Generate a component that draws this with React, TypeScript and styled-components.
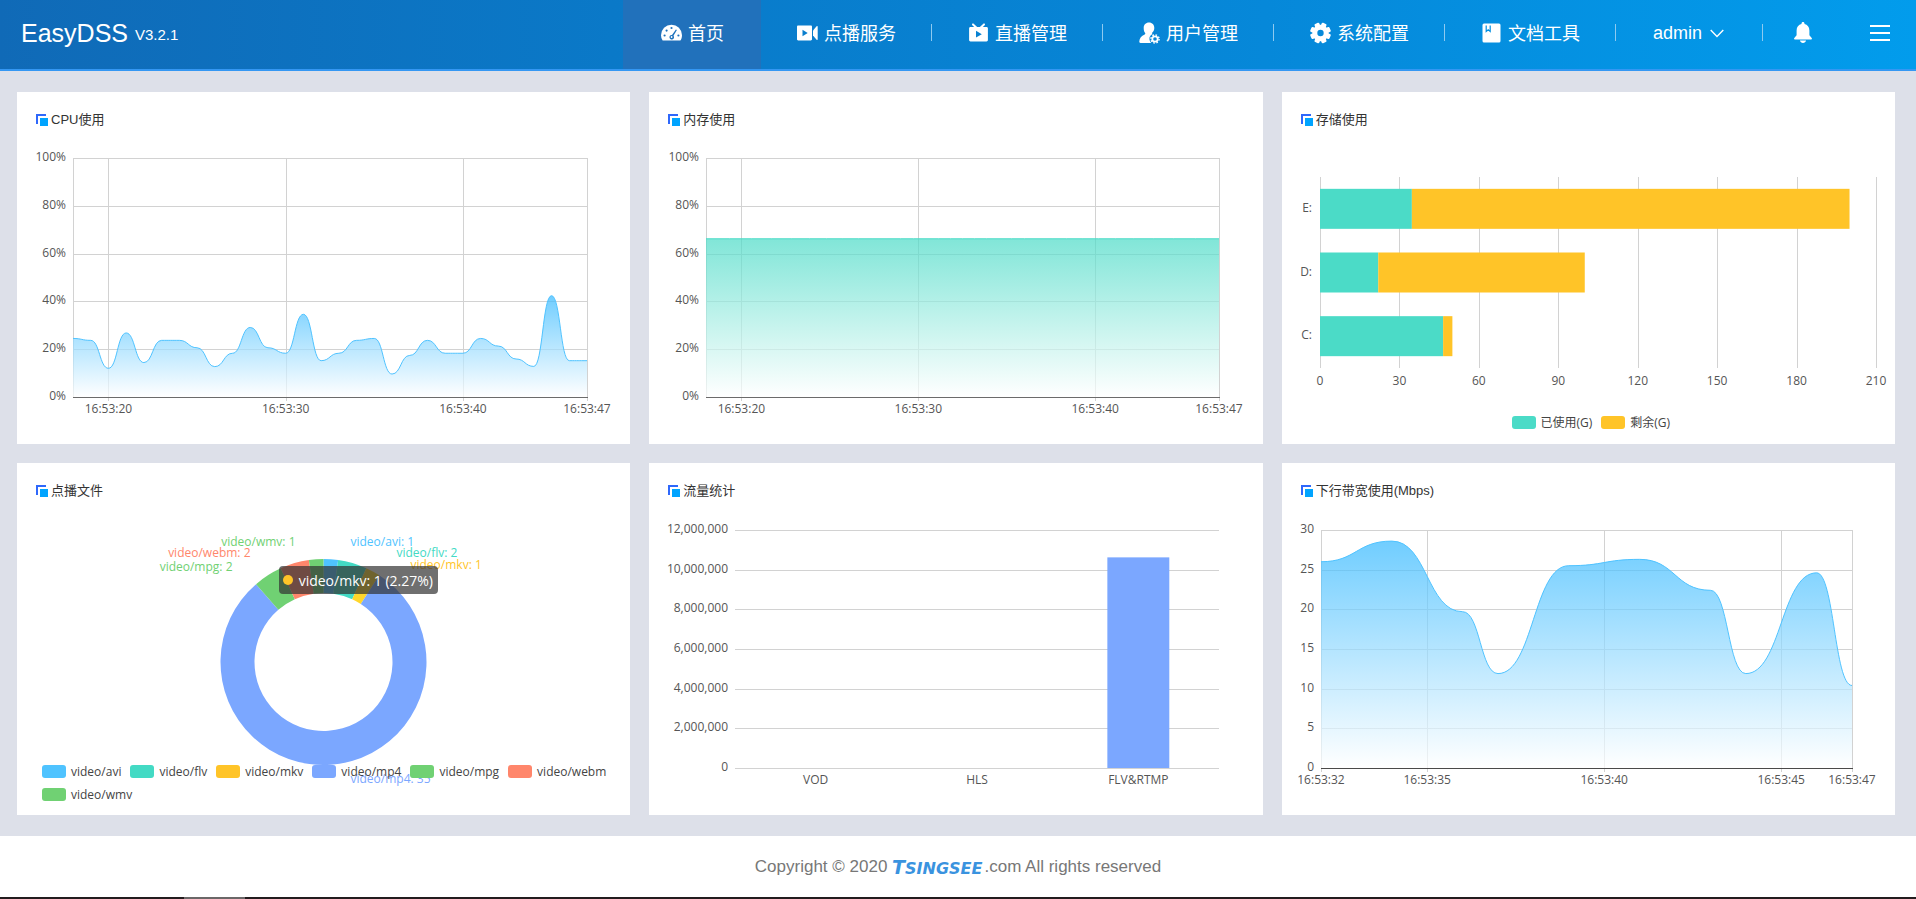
import React, { useLayoutEffect, useRef, useState } from "react";
import styled, { createGlobalStyle } from "styled-components";

/* ---------- theme values ---------- */

const uiFont = '"Liberation Sans", "Noto Sans CJK SC", sans-serif';
const chartFont = '"Open Sans", "Noto Sans CJK SC", sans-serif';

const color = {
  sky: "#4fc3ff",
  teal: "#4bdbc7",
  amber: "#ffc428",
  blue: "#7ba7ff",
  green: "#70d173",
  coral: "#ff866b",
  grid: "#d2d2d2",
  label: "#555",
};

const GlobalStyle = createGlobalStyle`
  *, *::before, *::after { box-sizing: border-box; }
  body { margin: 0; background: #dde0e9; font-family: ${uiFont}; color: #333; }
  button { font: inherit; color: inherit; background: none; border: 0; padding: 0; cursor: pointer; }
  a { color: inherit; text-decoration: none; }
  ul { list-style: none; margin: 0; padding: 0; }
`;

/* ---------- header ---------- */

const Header = styled.header`
  display: flex;
  align-items: stretch;
  justify-content: space-between;
  height: 71px;
  padding: 0 26px 0 21px;
  color: #fff;
  border-bottom: 2px solid #3497f3;
  background: linear-gradient(90deg, #106ab7 0%, #0a79c8 32%, #0688d9 66%, #029cec 100%) border-box;
`;

const Brand = styled.a`
  display: flex;
  align-items: center;
  gap: 7px;
  padding-bottom: 2px;
  font-size: 25px;
`;

const Version = styled.span`
  padding-top: 2px;
  font-size: 15px;
`;

const Nav = styled.nav`
  display: flex;
  align-items: stretch;
  font-size: 18px;
  white-space: nowrap;
`;

const NavLink = styled.a<{ $active?: boolean }>`
  display: flex;
  align-items: center;
  justify-content: center;
  gap: 6px;
  min-width: 138px;
  padding: 0 35px 6px 36px;
  background: ${(p) => (p.$active ? "#2171bb" : "transparent")};

  svg { display: block; width: 21px; height: 22px; margin-top: 2px; }
`;

const Divider = styled.span`
  align-self: center;
  width: 1px;
  height: 17px;
  margin-bottom: 4px;
  background: #8ecaf0;
`;

const UserButton = styled.button`
  display: flex;
  align-items: center;
  gap: 8px;
  padding: 0 38px 2px 37px;
`;

const IconButton = styled.button<{ $gap: number }>`
  display: flex;
  align-items: center;
  padding: 0 0 4px;
  margin-left: ${(p) => p.$gap}px;

  svg { display: block; }
`;

const GaugeIcon = () => (
  <svg viewBox="0 0 21 22" aria-hidden="true">
    <path fill="#fff" d="M1.6 18.6A10.4 10.4 0 0 1 0 13.2 10.5 10.5 0 0 1 21 13.2c0 2-.6 3.900-1.600 5.400z" />
    <g fill="#1f72bc">
      <circle cx="3.600" cy="13.500" r="1.100" />
      <circle cx="5.600" cy="8.600" r="1.100" />
      <circle cx="10.500" cy="6" r="1.100" />
      <circle cx="17.400" cy="13.500" r="1.100" />
      <path d="M14.900 7.400l1 .700-3.400 5.600a2.300 2.300 0 1 1-1.500-.800z" />
    </g>
    <circle cx="10.600" cy="15" r=".9" fill="#fff" />
  </svg>
);

const VideoIcon = () => (
  <svg viewBox="0 0 21 22" aria-hidden="true">
    <path fill="#fff" fillRule="evenodd" d="M1.200 3.500h12.600c.7 0 1.200.5 1.200 1.200v12.600c0 .7-.5 1.200-1.200 1.200H1.200C.5 18.500 0 18 0 17.300V4.700c0-.7.5-1.200 1.200-1.200zM5.500 7.800v6.400l5.200-3.200z" />
    <path fill="#fff" d="M16 8.600l3.600-4.300c.5-.5 1.100-.3 1.100.4v12.600c0 .7-.6.900-1.100.4L16 13.400z" />
  </svg>
);

const TvIcon = () => (
  <svg viewBox="0 0 21 22" aria-hidden="true">
    <path fill="none" stroke="#fff" strokeWidth="2" strokeLinecap="round" d="M5 2.400l4 3.800M16 2.400l-4 3.800" />
    <path fill="#fff" fillRule="evenodd" d="M2.500 5h16c.8 0 1.400.6 1.400 1.400v11.700c0 .8-.6 1.400-1.400 1.400h-16c-.8 0-1.400-.6-1.400-1.400V6.400C1.100 5.600 1.700 5 2.500 5zM8 8.800v6.800l5.800-3.400z" />
  </svg>
);

const UserIcon = () => (
  <svg viewBox="0 0 21 22" aria-hidden="true">
    <path fill="#fff" d="M10 .5c3.200 0 5.300 2.300 5.300 5.400 0 2-.9 3.500-2 4.700-.4.500-.3 1.200.2 1.500-2.200 1-3.400 3.100-3 5.600.2 1.400.8 2.500 1.700 3.300H1.500c-.8 0-1.300-.6-1.200-1.400.2-3.500 2-5.900 5.400-7.200.7-.3.800-1 .3-1.600C5.100 9.600 4.700 8 4.700 5.900 4.700 2.800 6.800.5 10 .5z" />
    <circle cx="16" cy="17" r="2.700" fill="none" stroke="#fff" strokeWidth="1.800" />
    <circle cx="16" cy="17" r="4.100" fill="none" stroke="#fff" strokeWidth="1.400" strokeDasharray="1.610 1.610" />
  </svg>
);

const GearIcon = () => (
  <svg viewBox="0 0 21 22" aria-hidden="true">
    <circle cx="10.500" cy="11" r="5.700" fill="none" stroke="#fff" strokeWidth="5" />
    <g fill="#fff">
      {[0, 45, 90, 135, 180, 225, 270, 315].map((a) => (
        <rect key={a} x="7.900" y=".6" width="5.200" height="4" rx="1.200" transform={`rotate(${a + 22.5} 10.5 11)`} />
      ))}
    </g>
  </svg>
);

const BookIcon = () => (
  <svg viewBox="0 0 21 22" aria-hidden="true">
    <rect x="1.500" y="1.500" width="18" height="19" rx="1.500" fill="#fff" />
    <path fill="none" stroke="#0490e2" strokeWidth="1.200" d="M5.200 3.500v6l2-1.800 2 1.800v-6" />
  </svg>
);

const ChevronIcon = () => (
  <svg width="14" height="9" viewBox="0 0 14 9" aria-hidden="true">
    <path fill="none" stroke="#fff" strokeWidth="1.400" d="M.7 1L7 7.600 13.300 1" />
  </svg>
);

const BellIcon = () => (
  <svg width="18" height="21" viewBox="0 0 18 21" aria-hidden="true">
    <path fill="#fff" d="M9 0c.9 0 1.500.6 1.500 1.500v.6c3 .7 4.900 3.100 4.900 6.300v4.800l2.300 2.900c.5.700.2 1.300-.6 1.300H.9c-.8 0-1.100-.6-.6-1.300l2.300-2.900V8.400c0-3.200 1.900-5.600 4.900-6.300v-.6C7.500.6 8.100 0 9 0zM5.900 18.600h6.200C11.700 20.100 10.500 21 9 21s-2.700-.9-3.100-2.400z" />
  </svg>
);

const MenuIcon = () => (
  <svg width="20" height="16" viewBox="0 0 20 16" aria-hidden="true">
    <path fill="#fff" d="M0 0h20v2H0zM0 7h20v2H0zM0 14h20v2H0z" />
  </svg>
);

const navItems = [
  { label: "点播服务", Icon: VideoIcon },
  { label: "直播管理", Icon: TvIcon },
  { label: "用户管理", Icon: UserIcon },
  { label: "系统配置", Icon: GearIcon },
  { label: "文档工具", Icon: BookIcon },
];

const TopBar = () => (
  <Header>
    <Brand href="#home">
      EasyDSS <Version>V3.2.1</Version>
    </Brand>
    <Nav>
      <NavLink href="#home" $active>
        <GaugeIcon />
        首页
      </NavLink>
      {navItems.map(({ label, Icon }) => (
        <React.Fragment key={label}>
          <NavLink href={`#${label}`}>
            <Icon />
            {label}
          </NavLink>
          <Divider />
        </React.Fragment>
      ))}
      <UserButton type="button">
        admin
        <ChevronIcon />
      </UserButton>
      <Divider />
      <IconButton type="button" $gap={31} aria-label="通知">
        <BellIcon />
      </IconButton>
      <IconButton type="button" $gap={58} aria-label="菜单">
        <MenuIcon />
      </IconButton>
    </Nav>
  </Header>
);

/* ---------- cards ---------- */

const Board = styled.main`
  display: grid;
  grid-template-columns: repeat(3, minmax(0, 1fr));
  gap: 19px;
  padding: 21px 21px 21px 17px;
`;

const Card = styled.section`
  background: #fff;
`;

const CardTitle = styled.h2`
  display: flex;
  align-items: center;
  gap: 3px;
  height: 54px;
  margin: 0;
  padding: 0 19px 2px;
  font-size: 13px;
  font-weight: 400;

  svg { margin-top: 4px; }
`;

const Plot = styled.div<{ $height: number }>`
  position: relative;
  height: ${(p) => p.$height}px;

  > svg { display: block; }
`;

const ChartSvg = styled.svg`
  width: 100%;
  height: 100%;
  font-family: ${chartFont};
  font-size: 12px;
  fill: ${color.label};
`;

const Panel = ({ title, children }: { title: string; children: React.ReactNode }) => (
  <Card>
    <CardTitle>
      <svg width="12" height="12" viewBox="0 0 12 12" aria-hidden="true">
        <path fill="#2f68fb" d="M0 0h10v2H2v8H0z" />
        <path fill="#00a4ff" d="M4 4h8v8H4z" />
      </svg>
      {title}
    </CardTitle>
    {children}
  </Card>
);

const useWidth = () => {
  const ref = useRef<HTMLDivElement>(null);
  const [width, setWidth] = useState(613);
  useLayoutEffect(() => {
    const el = ref.current;
    if (!el) return;
    const update = () => setWidth(el.clientWidth);
    update();
    const observer = new ResizeObserver(update);
    observer.observe(el);
    return () => observer.disconnect();
  }, []);
  return [ref, width] as const;
};

/* ---------- area chart ---------- */

type Point = [number, number];

interface AreaProps {
  name: string;
  id: string;
  points: Point[];
  maxX: number;
  maxY: number;
  yTicks: number[];
  xTicks: [number, string][];
  unit?: string;
  left: number;
  right: number;
  top: number;
  axis: string;
  line: string;
  fill: string;
}

const PLOT_BOTTOM = 251;

const AreaChart = (p: AreaProps) => {
  const [ref, width] = useWidth();
  const x = (v: number) => p.left + (v / p.maxX) * (width - p.left - p.right);
  const y = (v: number) => PLOT_BOTTOM - (v / p.maxY) * (PLOT_BOTTOM - p.top);
  const snap = (v: number) => Math.round(v) + 0.5;

  const curve = p.points
    .map(([px, py], i) => {
      if (i === 0) return `M${x(px)} ${y(py)}`;
      const [qx, qy] = p.points[i - 1];
      const mid = (x(px) + x(qx)) / 2;
      return `C${mid} ${y(qy)} ${mid} ${y(py)} ${x(px)} ${y(py)}`;
    })
    .join("");
  const peak = Math.max(...p.points.map((pt) => pt[1]));

  return (
    <Plot ref={ref} $height={298}>
      <ChartSvg role="img" aria-label={p.name}>
        <defs>
          <linearGradient id={p.id} gradientUnits="userSpaceOnUse" x1="0" x2="0" y1={y(peak)} y2={PLOT_BOTTOM}>
            <stop offset="0" stopColor={p.fill} />
            <stop offset="1" stopColor="#fff" />
          </linearGradient>
        </defs>
        <g stroke={color.grid}>
          {p.yTicks.map((t) => (
            <line key={t} x1={x(0)} x2={x(p.maxX)} y1={snap(y(t))} y2={snap(y(t))} />
          ))}
          {[0, ...p.xTicks.map((t) => t[0])].map((t, i) => (
            <line key={i} x1={snap(x(t))} x2={snap(x(t))} y1={p.top} y2={PLOT_BOTTOM + (i ? 4 : 0)} />
          ))}
        </g>
        <path d={`${curve}L${x(p.maxX)} ${PLOT_BOTTOM}L${x(0)} ${PLOT_BOTTOM}Z`} fill={`url(#${p.id})`} opacity={0.7} />
        <line x1={x(0)} x2={x(p.maxX) + 1} y1={PLOT_BOTTOM + 0.5} y2={PLOT_BOTTOM + 0.5} stroke={p.axis} />
        <path d={curve} fill="none" stroke={p.line} />
        {p.yTicks.map((t) => (
          <text key={t} x={p.left - 7} y={y(t) + 3} textAnchor="end">
            {t}
            {p.unit}
          </text>
        ))}
        {p.xTicks.map(([t, label]) => (
          <text key={label} x={x(t)} y={PLOT_BOTTOM + 16} textAnchor="middle">
            {label}
          </text>
        ))}
      </ChartSvg>
    </Plot>
  );
};

const cpu = [
  24.5, 23.7, 12, 26.8, 14.4, 23.7, 23.7, 20.6, 12.7, 18.3, 29.1, 20.6, 18.3, 34.6, 15.2, 18.3, 23.7, 24.5, 9.6, 17.4,
  23.7, 18.3, 18.3, 24.5, 21.3, 15.9, 12.8, 42.4, 15.2, 15.2,
];
const minuteTicks: [number, string][] = [
  [2, "16:53:20"],
  [12, "16:53:30"],
  [22, "16:53:40"],
  [29, "16:53:47"],
];
const percentTicks = [0, 20, 40, 60, 80, 100];

const bandwidth: Point[] = [
  [0, 26], [2, 28.6], [4, 19.7], [5, 11.9], [7, 25.5], [9, 26.3], [11, 22.4], [12, 11.9], [14, 24.6], [15, 10.4],
];

/* ---------- legends ---------- */

const Legend = styled.ul<{ $center?: boolean; $overlay?: boolean }>`
  display: flex;
  flex-wrap: wrap;
  justify-content: ${(p) => (p.$center ? "center" : "flex-start")};
  column-gap: 9px;
  padding: 0 20px ${(p) => (p.$center ? 10 : 0)}px 25px;
  font-family: ${chartFont};
  font-size: 12px;
  line-height: 23px;
  color: #444;
  ${(p) => p.$overlay && "position: absolute; left: 0; right: 0; bottom: 9px;"}
`;

const LegendItem = styled.li<{ $color: string }>`
  display: flex;
  align-items: center;
  gap: 5px;

  &::before {
    content: "";
    width: 24px;
    height: 13px;
    border-radius: 3px;
    background: ${(p) => p.$color};
  }
`;

/* ---------- storage chart ---------- */

const disks = [
  { name: "E:", used: 34.7, total: 200 },
  { name: "D:", used: 22, total: 100 },
  { name: "C:", used: 46.5, total: 50 },
];

const StorageChart = () => {
  const [ref, width] = useWidth();
  const left = 38;
  const top = 31;
  const bottom = 222;
  const x = (v: number) => left + (v / 210) * (width - left - 19);
  const band = (bottom - top) / disks.length;
  return (
    <>
      <Plot ref={ref} $height={265}>
        <ChartSvg role="img" aria-label="存储使用">
          {[0, 30, 60, 90, 120, 150, 180, 210].map((t) => (
            <g key={t}>
              <line x1={Math.round(x(t)) + 0.5} x2={Math.round(x(t)) + 0.5} y1={top} y2={bottom} stroke={color.grid} />
              <text x={x(t)} y={bottom + 17} textAnchor="middle">
                {t}
              </text>
            </g>
          ))}
          {disks.map((d, i) => {
            const mid = top + band * (i + 0.5);
            return (
              <g key={d.name}>
                <rect x={x(0)} y={mid - 20} width={x(d.used) - x(0)} height={40} fill={color.teal} />
                <rect x={x(d.used)} y={mid - 20} width={x(d.total) - x(d.used)} height={40} fill={color.amber} />
                <text x={left - 8} y={mid + 3} textAnchor="end">
                  {d.name}
                </text>
              </g>
            );
          })}
        </ChartSvg>
      </Plot>
      <Legend $center>
        <LegendItem $color={color.teal}>已使用(G)</LegendItem>
        <LegendItem $color={color.amber}>剩余(G)</LegendItem>
      </Legend>
    </>
  );
};

/* ---------- file type ring ---------- */

const files = [
  { name: "video/avi", count: 1, fill: color.sky, dx: 27, y: 25 },
  { name: "video/flv", count: 2, fill: "#43dac4", dx: 73, y: 36 },
  { name: "video/mkv", count: 1, fill: color.amber, dx: 87, y: 48 },
  { name: "video/mp4", count: 35, fill: color.blue, dx: 27, y: 262 },
  { name: "video/mpg", count: 2, fill: color.green, dx: -91, y: 50 },
  { name: "video/webm", count: 2, fill: color.coral, dx: -73, y: 36 },
  { name: "video/wmv", count: 1, fill: color.green, dx: -28, y: 25 },
];

const Tooltip = styled.div`
  position: absolute;
  top: 49px;
  left: calc(50% - 45px);
  display: flex;
  align-items: center;
  gap: 6px;
  height: 28px;
  padding: 0 5px 0 4px;
  border-radius: 4px;
  background: rgba(50, 50, 50, 0.7);
  color: #fff;
  font-family: ${chartFont};
  font-size: 14px;
  white-space: nowrap;

  &::before {
    content: "";
    width: 10px;
    height: 10px;
    border-radius: 50%;
    background: ${color.amber};
  }
`;

const RingChart = () => {
  const [ref, width] = useWidth();
  const cx = width / 2;
  const cy = 145;
  const outer = 103;
  const inner = 69;
  const total = files.reduce((sum, f) => sum + f.count, 0);
  let turned = 0;
  const at = (r: number, a: number) => `${cx + r * Math.sin(a)} ${cy - r * Math.cos(a)}`;
  return (
    <Plot ref={ref} $height={298}>
      <ChartSvg role="img" aria-label="点播文件">
        {files.map((f) => {
          const a = (turned / total) * 2 * Math.PI;
          turned += f.count;
          const b = (turned / total) * 2 * Math.PI;
          const large = b - a > Math.PI ? 1 : 0;
          return (
            <path
              key={f.name}
              fill={f.name === "video/mkv" ? "#ffd62b" : f.fill}
              d={`M${at(outer, a)}A${outer} ${outer} 0 ${large} 1 ${at(outer, b)}L${at(inner, b)}A${inner} ${inner} 0 ${large} 0 ${at(inner, a)}Z`}
            />
          );
        })}
        {files.map((f) => (
          <text key={f.name} x={cx + f.dx} y={f.y + 4} fill={f.fill} textAnchor={f.dx < 0 ? "end" : "start"}>
            {f.name}: {f.count}
          </text>
        ))}
      </ChartSvg>
      <Legend $overlay>
        {files.map((f) => (
          <LegendItem key={f.name} $color={f.fill}>
            {f.name}
          </LegendItem>
        ))}
      </Legend>
      <Tooltip role="tooltip">video/mkv: 1 (2.27%)</Tooltip>
    </Plot>
  );
};

/* ---------- traffic chart ---------- */

const traffic = [
  { name: "VOD", value: 0 },
  { name: "HLS", value: 0 },
  { name: "FLV&RTMP", value: 10620000 },
];

const TrafficChart = () => {
  const [ref, width] = useWidth();
  const left = 86;
  const top = 13;
  const right = width - 43;
  const y = (v: number) => PLOT_BOTTOM - (v / 12000000) * (PLOT_BOTTOM - top);
  const band = (right - left) / traffic.length;
  const bar = band * 0.384;
  return (
    <Plot ref={ref} $height={298}>
      <ChartSvg role="img" aria-label="流量统计">
        {[0, 2, 4, 6, 8, 10, 12].map((m) => (
          <g key={m}>
            <line
              x1={left}
              x2={right}
              y1={Math.round(y(m * 1000000)) + 0.5}
              y2={Math.round(y(m * 1000000)) + 0.5}
              stroke={color.grid}
            />
            <text x={left - 7} y={y(m * 1000000) + 3} textAnchor="end">
              {(m * 1000000).toLocaleString("en-US")}
            </text>
          </g>
        ))}
        {traffic.map((t, i) => {
          const mid = left + band * (i + 0.5);
          return (
            <g key={t.name}>
              <rect x={mid - bar / 2} width={bar} y={y(t.value)} height={PLOT_BOTTOM - y(t.value)} fill={color.blue} />
              <text x={mid} y={PLOT_BOTTOM + 16} textAnchor="middle">
                {t.name}
              </text>
            </g>
          );
        })}
      </ChartSvg>
    </Plot>
  );
};

/* ---------- footer ---------- */

const Footer = styled.footer`
  display: flex;
  align-items: center;
  justify-content: center;
  height: 61px;
  background: #fff;
  color: #777;
  font-size: 17px;
  white-space: pre;
`;

const Wordmark = styled.a`
  display: inline-block;
  margin: 0 2px 0 0;
  color: #3a93df;
  font: italic bold 16px "DejaVu Sans", sans-serif;

  &::first-letter { font-size: 19px; }
`;

const BottomStrip = styled.div`
  height: 2px;
  background: linear-gradient(90deg, #231c1e 184px, #6b6768 184px, #6b6768 245px, #231c1e 245px);
`;

export default function App() {
  return (
    <>
      <GlobalStyle />
      <TopBar />
      <Board>
        <Panel title="CPU使用">
          <AreaChart
            name="CPU使用"
            id="cpu-fill"
            points={cpu.map((v, i): Point => [i, v])}
            maxX={29}
            maxY={100}
            yTicks={percentTicks}
            xTicks={minuteTicks}
            unit="%"
            left={56}
            right={43}
            top={12}
            axis="#6b6b6b"
            line={color.sky}
            fill="#33b8ff"
          />
        </Panel>
        <Panel title="内存使用">
          <AreaChart
            name="内存使用"
            id="memory-fill"
            points={[[0, 66.2], [29, 66.2]]}
            maxX={29}
            maxY={100}
            yTicks={percentTicks}
            xTicks={minuteTicks}
            unit="%"
            left={57}
            right={43}
            top={12}
            axis="#6b6b6b"
            line={color.teal}
            fill={color.teal}
          />
        </Panel>
        <Panel title="存储使用">
          <StorageChart />
        </Panel>
        <Panel title="点播文件">
          <RingChart />
        </Panel>
        <Panel title="流量统计">
          <TrafficChart />
        </Panel>
        <Panel title="下行带宽使用(Mbps)">
          <AreaChart
            name="下行带宽使用"
            id="bandwidth-fill"
            points={bandwidth}
            maxX={15}
            maxY={30}
            yTicks={[0, 5, 10, 15, 20, 25, 30]}
            xTicks={[
              [0, "16:53:32"],
              [3, "16:53:35"],
              [8, "16:53:40"],
              [13, "16:53:45"],
              [15, "16:53:47"],
            ]}
            left={39}
            right={43}
            top={13}
            axis="#4a4a4a"
            line={color.sky}
            fill="#33b8ff"
          />
        </Panel>
      </Board>
      <Footer>
        {"Copyright © 2020 "}
        <Wordmark href="#tsingsee">TSINGSEE</Wordmark>
        {".com All rights reserved"}
      </Footer>
      <BottomStrip />
    </>
  );
}
